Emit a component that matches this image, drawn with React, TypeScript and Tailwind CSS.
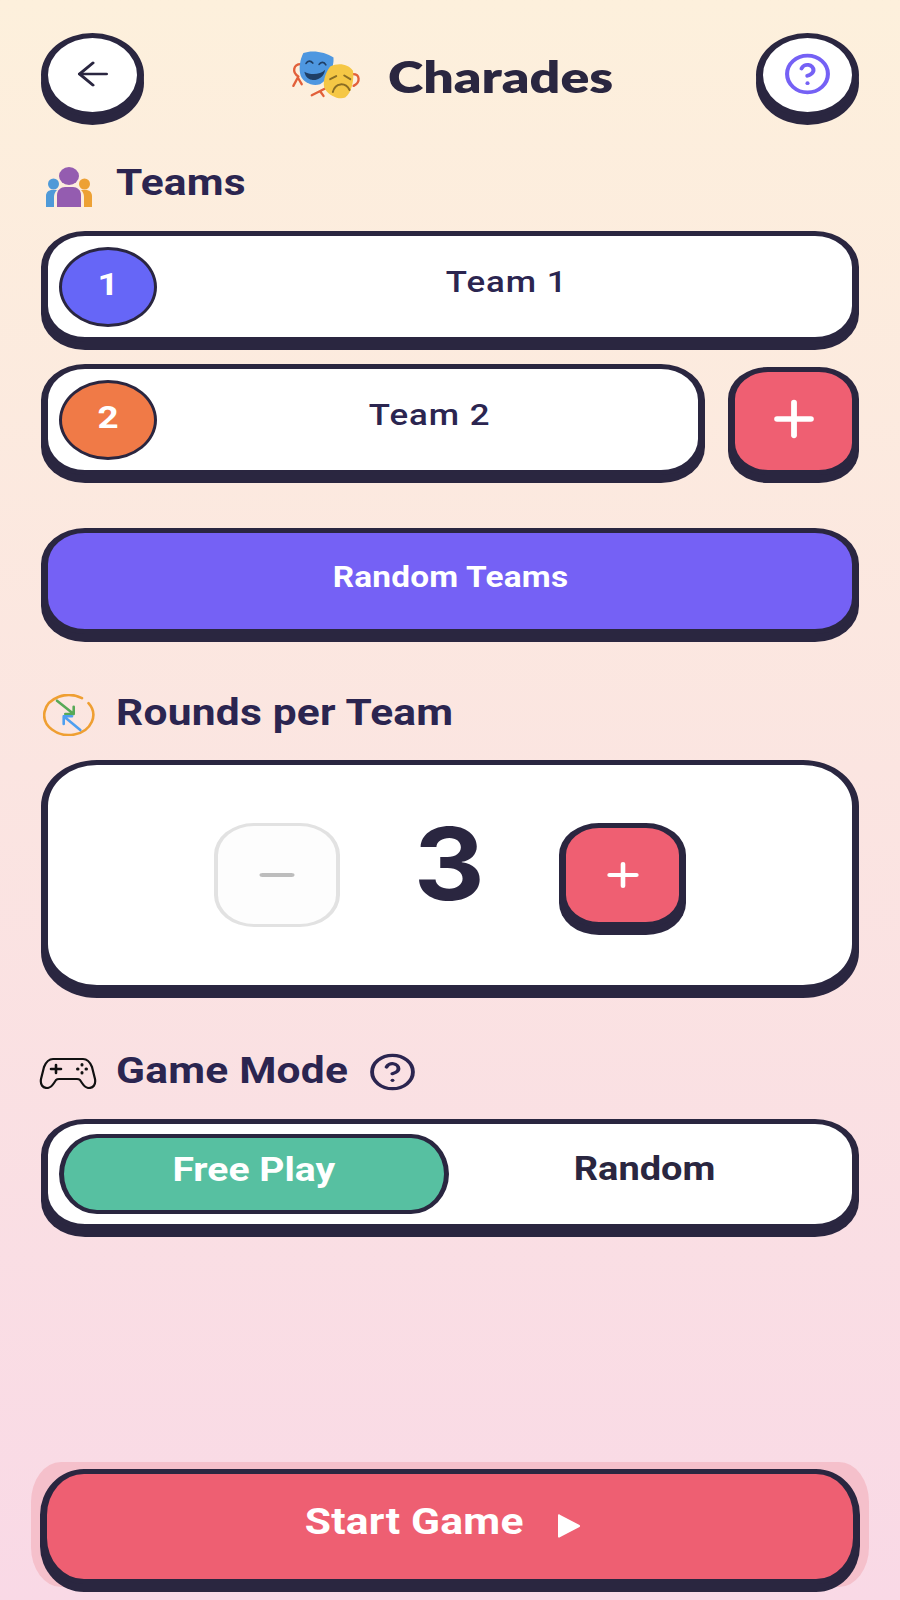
import { ArrowLeft, CircleHelp, Plus, Minus } from 'lucide-react';
import type { ReactNode } from 'react';

const roboto = { fontFamily: 'Roboto, sans-serif' };

function MasksIcon() {
  return (
    <svg viewBox="60 60 215 155" className="w-[72px] h-[52px]" fill="none" strokeLinecap="round">
      <path d="M92 105C70 105 65 130 85 142M85 142L70 170M85 148L95 165" stroke="#e2603a" strokeWidth="7" />
      <path d="M248 135C268 135 272 158 250 170M165 178L125 198M150 186L160 200" stroke="#e2603a" strokeWidth="7" />
      <path d="M100 72C125 62 165 68 190 85C192 115 175 150 150 165C125 172 100 160 92 140C85 120 90 90 100 72z" fill="#4e97e0" />
      <path d="M108 103C113 94 122 94 128 102M147 106C152 97 162 98 167 107" stroke="#1f3f66" strokeWidth="5" />
      <path d="M103 128C120 138 150 138 165 122C160 150 135 155 125 152C112 150 105 140 103 128z" fill="#1f3f66" />
      <path d="M180 112C205 100 235 105 248 125C252 150 245 190 225 205C205 212 178 200 165 180C155 165 165 130 180 112z" fill="#f5c745" />
      <path d="M180 150L198 141M222 139L240 150M188 188C195 160 225 158 238 182" stroke="#8a6d24" strokeWidth="6" />
    </svg>
  );
}

function PeopleIcon() {
  return (
    <svg viewBox="0 0 48 40" className="w-[48px] h-[40px]">
      <circle cx="8.5" cy="17" r="5.5" fill="#4f9ad8" />
      <path d="M1 40V29c0-4 3-6 6-6h5c-2 2-3 4-3 7v10z" fill="#4f9ad8" />
      <circle cx="39.500" cy="17" r="5.5" fill="#eda135" />
      <path d="M47 40V29c0-4-3-6-6-6h-5c2 2 3 4 3 7v10z" fill="#eda135" />
      <ellipse cx="24" cy="9" rx="10" ry="9" fill="#945cb0" />
      <path d="M12 40V28c0-5 4-8 8-8h8c4 0 8 3 8 8v12z" fill="#945cb0" />
    </svg>
  );
}

function RoundsIcon() {
  return (
    <svg viewBox="0 0 52 42" className="w-[52px] h-[42px]" fill="none" strokeLinecap="round" strokeLinejoin="round">
      <path d="M39 4.200A24.500 20 0 1 0 45.500 9.200" stroke="#ef9f32" strokeWidth="2.600" />
      <path d="M14 6.700L30.700 20M30.700 12.700V20H22.300" stroke="#57a957" strokeWidth="2.600" />
      <path d="M37.300 36L20.700 22.300M20.700 30V22.300H29" stroke="#4f9ff0" strokeWidth="2.600" />
    </svg>
  );
}

function GamepadIcon() {
  return (
    <svg viewBox="0 0 58 32" className="w-[58px] h-[32px]" fill="none" stroke="#111" strokeWidth="2.2" strokeLinecap="round" strokeLinejoin="round">
      <path d="M14 2h30c5 0 7 3 9 8l3 12c1 6-2 9-6 9-3 0-5-2-7-5l-2-3c-1-1-2-1-3-1H20c-1 0-2 0-3 1l-2 3c-2 3-4 5-7 5-4 0-7-3-6-9l3-12c2-5 4-8 9-8z" />
      <path d="M12 12h10M17 8v8" strokeWidth="2.6" />
      <path d="M43 7.500v.5M43 15.500v.5M38.500 12h.5M47 12h.5" strokeWidth="3" />
    </svg>
  );
}

function SectionTitle({ icon, label, extra }: { icon: ReactNode; label: string; extra?: ReactNode }) {
  return (
    <div className="flex items-center">
      <div className="w-[75px] shrink-0 flex justify-start">{icon}</div>
      <span
        className="origin-left scale-x-118 text-[36px] leading-[42px] font-bold tracking-[0.2px] text-[#2b2550] whitespace-nowrap"
        style={roboto}
      >
        {label}
      </span>
      {extra}
    </div>
  );
}

function TeamRow({ n, color, grow }: { n: number; color: string; grow?: boolean }) {
  return (
    <div className={`${grow ? 'flex-1' : 'w-full'} h-[111px] flex items-center bg-white border-x-[7px] border-y-[5px] border-[#2a2640] rounded-[44px/36px] shadow-[0_8px_0_#2a2640] pl-[11px] pr-[6px]`}>
      <div className={`${color} w-[98px] h-[80px] shrink-0 rounded-[50%] border-[3.5px] border-[#2a2640] flex items-center justify-center`}>
        <span className="scale-x-115 text-[32px] font-bold text-white -mt-[6px]" style={roboto}>{n}</span>
      </div>
      <div className="flex-1 text-center -mt-[8px] pl-[10px]">
        <span className="inline-block scale-x-120 text-[29px] font-medium tracking-[0.8px] text-[#2b2550]" style={roboto}>Team {n}</span>
      </div>
    </div>
  );
}

export default function App() {
  return (
    <div className="w-[900px] h-[1600px] flex flex-col px-[41px] pt-[33px] bg-gradient-to-b from-[#fdf0dc] to-[#f9d9e6]" style={roboto}>
      {/* header */}
      <div className="h-[84px] flex items-center justify-between">
        <button type="button" className="w-[103px] h-[84px] flex items-center justify-center bg-white border-x-[7px] border-y-[5px] border-[#2a2640] rounded-[50%] shadow-[0_8px_0_#2a2640]">
          <ArrowLeft className="w-[46px] h-[38px] text-[#2a2640] -mt-[2px]" strokeWidth={1.7} preserveAspectRatio="none" />
        </button>
        <div className="flex items-center">
          <MasksIcon />
          <span className="origin-left scale-x-122 ml-[26px] w-[223px] text-[44px] font-extrabold text-[#2a2640] whitespace-nowrap mt-[2px]" style={{ fontFamily: 'Lato, sans-serif' }}>Charades</span>
        </div>
        <button type="button" className="w-[103px] h-[84px] flex items-center justify-center bg-white border-x-[7px] border-y-[5px] border-[#2a2640] rounded-[50%] shadow-[0_8px_0_#2a2640]">
          <CircleHelp className="w-[49px] h-[44px] text-[#7561f5] -mt-[2px]" strokeWidth={2} preserveAspectRatio="none" />
        </button>
      </div>

      {/* teams */}
      <div className="mt-[42px]">
        <SectionTitle icon={<div className="ml-[4px] mt-[8px]"><PeopleIcon /></div>} label="Teams" />
      </div>
      <div className="mt-[24px]">
        <TeamRow n={1} color="bg-[#6666f7]" />
      </div>
      <div className="mt-[22px] flex items-start gap-[23px]">
        <TeamRow n={2} color="bg-[#f07a47]" grow />
        <button type="button" className="mt-[3px] w-[131px] h-[108px] shrink-0 flex items-center justify-center bg-[#ef5f72] border-x-[7px] border-y-[5px] border-[#2a2640] rounded-[40px/32px] shadow-[0_8px_0_#2a2640]">
          <Plus className="w-[58px] h-[56px] text-white -mt-[4px]" strokeWidth={2.4} preserveAspectRatio="none" />
        </button>
      </div>
      <button type="button" className="mt-[53px] w-full h-[106px] shrink-0 flex items-center justify-center bg-[#7561f5] border-x-[7px] border-y-[5px] border-[#2a2640] rounded-[44px/36px] shadow-[0_8px_0_#2a2640]">
        <span className="scale-x-115 text-[29px] font-bold tracking-[0.2px] text-white -mt-[6px]" style={roboto}>Random Teams</span>
      </button>

      {/* rounds */}
      <div className="mt-[56px]">
        <SectionTitle icon={<div className="ml-[2px] mt-[4px]"><RoundsIcon /></div>} label="Rounds per Team" />
      </div>
      <div className="mt-[24px] h-[230px] shrink-0 flex items-center justify-center bg-white border-x-[7px] border-y-[5px] border-[#2a2640] rounded-[56px/46px] shadow-[0_8px_0_#2a2640]">
        <div className="w-[126px] h-[104px] flex items-center justify-center bg-[#fdfdfd] border-x-[4px] border-y-[3.5px] border-[#e2e2e2] rounded-[40px/32px]">
          <Minus className="w-[50px] h-[34px] text-[#bdbdbd]" strokeWidth={2.8} preserveAspectRatio="none" />
        </div>
        <div className="w-[219px] text-center -mt-[22px]">
          <span className="inline-block scale-x-110 text-[100px] leading-[100px] font-bold text-[#2a2640]" style={{ fontFamily: 'Inter, sans-serif' }}>3</span>
        </div>
        <button type="button" className="w-[127px] h-[104px] flex items-center justify-center bg-[#ef5f72] border-x-[7px] border-y-[5px] border-[#2a2640] rounded-[40px/32px] shadow-[0_8px_0_#2a2640]">
          <Plus className="w-[46px] h-[38px] text-white" strokeWidth={2.4} preserveAspectRatio="none" />
        </button>
      </div>

      {/* game mode */}
      <div className="mt-[60px]">
        <SectionTitle
          icon={<div className="mt-[4px] -ml-[2px]"><GamepadIcon /></div>}
          label="Game Mode"
          extra={<CircleHelp className="ml-[55px] mt-[2px] w-[49px] h-[40px] text-[#2b2550]" strokeWidth={1.9} preserveAspectRatio="none" />}
        />
      </div>
      <div className="mt-[27px] h-[110px] shrink-0 flex items-center bg-white border-x-[7px] border-y-[5px] border-[#2a2640] rounded-[44px/36px] shadow-[0_8px_0_#2a2640] px-[11px]">
        <div className="w-[390px] h-[80px] shrink-0 flex items-center justify-center bg-[#57c0a1] border-x-[5px] border-y-[4px] border-[#2a2640] rounded-[38px/40px]">
          <span className="scale-x-115 text-[34px] font-bold text-white -mt-[10px]" style={roboto}>Free Play</span>
        </div>
        <div className="flex-1 text-center -mt-[10px]">
          <span className="inline-block scale-x-115 text-[33px] font-bold text-[#2a2640]" style={roboto}>Random</span>
        </div>
      </div>

      {/* start */}
      <div className="mt-auto -mx-[10px] mb-[13px] bg-[#f5c0cb] rounded-[30px/40px] pt-[7px] px-[9px] pb-[3px]">
        <button type="button" className="w-full h-[115px] flex items-center justify-center bg-[#ee5f72] border-x-[7px] border-y-[5px] border-[#2a2640] rounded-[44px/46px] shadow-[0_8px_0_#2a2640]">
          <span className="scale-x-115 text-[37px] font-bold tracking-[0.2px] text-white -mt-[10px] mr-[47px]" style={roboto}>Start Game</span>
          <svg viewBox="0 0 24 24" className="w-[24px] h-[24px] -mt-[2px]" fill="#fff"><path d="M1 1.500c0-1 1-1.500 1.800-.8L22.500 11c.8.600.8 1.500 0 2.100L2.800 23.300c-.8.700-1.800.2-1.800-.8z" /></svg>
        </button>
      </div>
    </div>
  );
}
